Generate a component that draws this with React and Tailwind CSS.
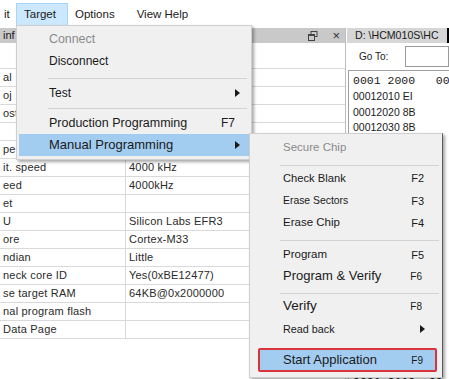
import React from "react";

const rows = [
  { l: "", v: "", h: "h-[26px]" },
  { l: "al", v: "" },
  { l: "oj", v: "" },
  { l: "ost", v: "" },
  { l: "", v: "" },
  { l: "pe", v: "" },
  { l: "it. speed", v: "4000 kHz" },
  { l: "eed", v: "4000kHz" },
  { l: "et", v: "" },
  { l: "U", v: "Silicon Labs EFR3" },
  { l: "ore", v: "Cortex-M33" },
  { l: "ndian", v: "Little" },
  { l: "neck core ID", v: "Yes(0xBE12477)" },
  { l: "se target RAM", v: "64KB@0x2000000" },
  { l: "nal program flash", v: "" },
  { l: "Data Page", v: "" },
];

function Arrow() {
  return (
    <svg width="5" height="8" viewBox="0 0 5 8" className="shrink-0">
      <path d="M0 0 L5 4 L0 8 Z" fill="#1a1a1a" />
    </svg>
  );
}

function Sep({ cls }) {
  return <div className={`h-px bg-[#d2d2d2] ${cls}`} />;
}

export default function App() {
  return (
    <div className="relative w-[449px] h-[379px] overflow-hidden bg-white font-['Liberation_Sans',Arial,sans-serif] text-[#1a1a1a]">
      {/* Menu bar */}
      <div className="flex items-center h-[28px] text-[11.5px] pt-[1px]">
        <div className="pl-[4px] w-[16px]">it</div>
        <div className="h-[24px] w-[52px] bg-[#cce8ff] border border-[#a9d4f5] flex items-center pl-[7px]">Target</div>
        <div className="ml-[7px]">Options</div>
        <div className="ml-[22px]">View Help</div>
      </div>

      {/* Body */}
      <div className="flex">
        {/* Left panel */}
        <div className="w-[346px] shrink-0 border-r border-[#bdbdbd]">
          <div className="h-[15px] bg-[#c9c9c9] flex items-center justify-between pl-[3px] pr-[5px] text-[11px]">
            <span>inf</span>
            <div className="flex items-center gap-[14px] text-[#333]">
              <svg width="10" height="10" viewBox="0 0 10 10">
                <rect x="3" y="0.5" width="6" height="5" fill="none" stroke="#444" />
                <rect x="0.5" y="3.5" width="6" height="6" fill="#c9c9c9" stroke="#444" />
                <line x1="0.5" y1="4.5" x2="6.5" y2="4.5" stroke="#444" />
              </svg>
              <span className="text-[13px] leading-none">×</span>
            </div>
          </div>
          {rows.map((r, i) => (
            <div key={i} className={`flex ${r.h || "h-[18px]"} border-b border-[#d9d9d9] text-[11px] tracking-[0.2px]`}>
              <div className="w-[126px] border-r border-[#d9d9d9] pl-[3px] flex items-center text-[#2a2a2a]">{r.l}</div>
              <div className="flex-1 pl-[3px] flex items-center text-[#2a2a2a]">{r.v}</div>
            </div>
          ))}
        </div>

        {/* Right panel */}
        <div className="flex-1 min-w-0 pl-[1px] overflow-hidden whitespace-nowrap">
          <div className="h-[15px] bg-[#d6d6d6] flex items-center text-[10.6px] pl-[8px] border-r-2 border-black">
            D: \HCM010S\HC
          </div>
          <div className="h-[27px] flex items-center pl-[12px] text-[10px]">
            <span className="w-[46px] shrink-0">Go To:</span>
            <div className="flex-1 h-[21px] border border-[#9a9a9a] bg-white" />
          </div>
          <div className="h-[309px] flex flex-col border-t border-l border-[#a0a0a0] ml-[1px] pl-[4px] pt-[2px] text-[10.5px] leading-[15.5px]">
            <div className="font-['Liberation_Mono',monospace] text-[11.5px] leading-[16px]">0001 2000&nbsp;&nbsp;&nbsp;00</div>
            <div>00012010 EI</div>
            <div>00012020 8B</div>
            <div>00012030 8B</div>
            <div className="mt-auto -mb-[11px] font-['Liberation_Mono',monospace] text-[11.5px] leading-[16px] font-bold">0001 2110&nbsp;&nbsp;00</div>
          </div>
        </div>
      </div>

      {/* Target dropdown */}
      <div className="absolute left-[16px] top-[25px] w-[236px] bg-[#f0f0f0] border border-[#cfcfcf] shadow-[2px_2px_3px_rgba(0,0,0,0.35)] pt-[2px] pb-[3px]">
        <div className="h-[22px] flex items-center pl-[32px] text-[12.4px] text-[#8a8a8a]">Connect</div>
        <div className="h-[22px] flex items-center pl-[32px] text-[12px]">Disconnect</div>
        <Sep cls="mt-[6px] mb-[6px] ml-[31px] mr-[4px]" />
        <div className="h-[15px] flex items-center pl-[32px] pr-[11px] text-[12px] justify-between">
          <span>Test</span>
          <Arrow />
        </div>
        <Sep cls="mt-[8px] mb-[3px] ml-[31px] mr-[4px]" />
        <div className="h-[22px] flex items-center pl-[32px] pr-[16px] justify-between">
          <span className="text-[12.5px]">Production Programming</span>
          <span className="text-[12px]">F7</span>
        </div>
        <div className="h-[22px] ml-[2px] mr-[2px] bg-[#a2cdf1] flex items-center pl-[30px] pr-[9px] justify-between">
          <span className="text-[13px]">Manual Programming</span>
          <Arrow />
        </div>
      </div>

      {/* Submenu */}
      <div className="absolute left-[249px] top-[133px] w-[194px] bg-[#f0f0f0] border border-[#cfcfcf] border-r-[#5a5a5a] shadow-[2px_2px_3px_rgba(0,0,0,0.35)] pt-[4px] pb-[5px]">
        <div className="h-[20px] flex items-center pl-[33px] text-[11.5px] text-[#8a8a8a]">Secure Chip</div>
        <Sep cls="mt-[7px] mb-[2px] ml-[30px] mr-[3px]" />
        <div className="h-[20px] flex items-center justify-between pl-[33px] pr-[18px]">
          <span className="text-[11.2px]">Check Blank</span>
          <span className="text-[11px]">F2</span>
        </div>
        <div className="h-[26px] flex items-center justify-between pl-[33px] pr-[18px]">
          <span className="text-[10.4px]">Erase Sectors</span>
          <span className="text-[11px]">F3</span>
        </div>
        <div className="h-[18px] flex items-center justify-between pl-[33px] pr-[18px]">
          <span className="text-[11.5px]">Erase Chip</span>
          <span className="text-[11px]">F4</span>
        </div>
        <Sep cls="mt-[8px] mb-[4px] ml-[30px] mr-[3px]" />
        <div className="h-[20px] flex items-center justify-between pl-[33px] pr-[18px]">
          <span className="text-[11.5px]">Program</span>
          <span className="text-[11px]">F5</span>
        </div>
        <div className="h-[22px] flex items-center justify-between pl-[33px] pr-[20px]">
          <span className="text-[13px]">Program &amp; Verify</span>
          <span className="text-[10px]">F6</span>
        </div>
        <Sep cls="mt-[6px] mb-[2px] ml-[30px] mr-[3px]" />
        <div className="h-[20px] flex items-center justify-between pl-[33px] pr-[20px]">
          <span className="text-[13.5px]">Verify</span>
          <span className="text-[10px]">F8</span>
        </div>
        <div className="h-[26px] flex items-center justify-between pl-[33px] pr-[17px]">
          <span className="text-[10.8px]">Read back</span>
          <Arrow />
        </div>
        <div className="mt-[6px] h-[24px] ml-[8px] mr-[5px] bg-[#a2cdf1] border-2 border-[#d9343c] rounded-[2px] flex items-center justify-between pl-[23px] pr-[12px]">
          <span className="text-[13px]">Start Application</span>
          <span className="text-[10px]">F9</span>
        </div>
      </div>
    </div>
  );
}
